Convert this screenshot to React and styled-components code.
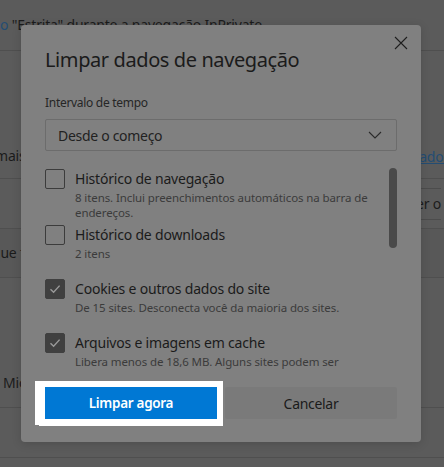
import React from "react";
import styled, { createGlobalStyle } from "styled-components";

const GlobalStyle = createGlobalStyle`
  html, body {
    margin: 0;
    padding: 0;
    background: #5b5b5b;
  }
  body {
    font-family: "Noto Sans", "Open Sans", sans-serif;
  }
`;

const Page = styled.div`
  position: relative;
  width: 444px;
  height: 467px;
  overflow: hidden;
  background: #5b5b5b;
  color: #1b1b1b;
  font-size: 14px;
  letter-spacing: -0.2px;
`;

const BgRow = styled.div`
  height: ${(p) => p.$h}px;
  display: flex;
  align-items: ${(p) => p.$align || "center"};
  justify-content: space-between;
  border-bottom: 1px solid #4f4f4f;
  background: ${(p) => p.$bg || "transparent"};
  box-sizing: border-box;
  padding-bottom: ${(p) => p.$pb || 0}px;
  white-space: nowrap;
`;

const BgText = styled.span`
  margin-left: ${(p) => p.$ml || 0}px;
  line-height: 20px;
`;

const BgLink = styled.span`
  color: #244d73;
  text-decoration: ${(p) => (p.$plain ? "none" : "underline")};
  margin-right: ${(p) => p.$mr || 0}px;
`;

const BgButton = styled.span`
  display: flex;
  align-items: center;
  height: 32px;
  margin-right: 3px;
  border-top: 1px solid #4c4c4c;
  border-bottom: 1px solid #4c4c4c;
  box-sizing: border-box;
`;

const Dialog = styled.div`
  position: absolute;
  left: 21px;
  top: 25px;
  width: 400px;
  height: 417px;
  box-sizing: border-box;
  padding: 21px 24px 23px;
  background: #808080;
  border-radius: 4px;
  box-shadow: 0 2px 10px rgba(0, 0, 0, 0.15);
  display: flex;
  flex-direction: column;
`;

const Header = styled.div`
  display: flex;
  justify-content: space-between;
  align-items: flex-start;
`;

const Title = styled.h1`
  margin: 0;
  font-size: 20px;
  line-height: 28px;
  font-weight: 400;
  letter-spacing: -0.4px;
  color: #1b1b1b;
`;

const Close = styled.button`
  width: 24px;
  height: 24px;
  margin: -15px -16px 0 0;
  padding: 0;
  border: none;
  background: none;
  display: flex;
  align-items: center;
  justify-content: center;
`;

const Label = styled.div`
  margin-top: 20px;
  font-size: 12px;
  line-height: 18px;
  letter-spacing: -0.3px;
  color: #262626;
`;

const Select = styled.div`
  margin-top: 7px;
  height: 32px;
  box-sizing: border-box;
  border: 1px solid #6c6c6c;
  border-radius: 2px;
  display: flex;
  align-items: center;
  justify-content: space-between;
  padding: 0 14px 0 12px;
  font-size: 14px;
  letter-spacing: -0.3px;
  color: #222;
`;

const ListWrap = styled.div`
  margin-top: 16px;
  height: 203px;
  display: flex;
  gap: 10px;
`;

const List = styled.div`
  flex: 1;
  overflow: hidden;
  padding-top: 2px;
`;

const Track = styled.div`
  width: 8px;
  padding-top: 1px;
`;

const Thumb = styled.div`
  height: 80px;
  border-radius: 4px;
  background: #4a4a4a;
`;

const Item = styled.div`
  height: ${(p) => p.$h}px;
  display: flex;
  align-items: flex-start;
  gap: 10px;
`;

const Box = styled.span`
  flex: none;
  width: 20px;
  height: 20px;
  box-sizing: border-box;
  border-radius: 2px;
  border: 1px solid ${(p) => (p.$checked ? "#404040" : "#3c3c3c")};
  background: ${(p) => (p.$checked ? "#404040" : "transparent")};
  display: flex;
  align-items: center;
  justify-content: center;
`;

const ItemText = styled.div`
  display: flex;
  flex-direction: column;
  gap: 1px;
`;

const ItemTitle = styled.div`
  font-size: 14px;
  line-height: 20px;
  letter-spacing: -0.2px;
  color: #1b1b1b;
`;

const ItemDesc = styled.div`
  font-size: 11.5px;
  line-height: 15px;
  letter-spacing: -0.1px;
  color: #3b3b3b;
`;

const Buttons = styled.div`
  margin-top: auto;
  display: flex;
  gap: 8px;
`;

const Button = styled.button`
  flex: 1;
  height: 32px;
  border: none;
  border-radius: ${(p) => (p.$primary ? 0 : 2)}px;
  font-family: inherit;
  font-size: ${(p) => (p.$primary ? 13.5 : 14)}px;
  letter-spacing: -0.3px;
  font-weight: ${(p) => (p.$primary ? 600 : 400)};
  color: ${(p) => (p.$primary ? "#ffffff" : "#1b1b1b")};
  background: ${(p) => (p.$primary ? "#0078d4" : "#7a7a7a")};
  box-shadow: ${(p) =>
    p.$primary
      ? "0 0 0 6px #fff, -4px 0 0 6px #fff, 0 1px 0 6px #fff"
      : "none"};
`;

const Check = () => (
  <svg width="14" height="14" viewBox="0 0 14 14">
    <path d="M2.5 7.3 L5.6 10.3 L11.6 3.6" fill="none" stroke="#9a9a9a" strokeWidth="1.4" />
  </svg>
);

const items = [
  {
    title: "Histórico de navegação",
    desc: ["8 itens. Inclui preenchimentos automáticos na barra de", "endereços."],
    checked: false,
    h: 56,
  },
  { title: "Histórico de downloads", desc: ["2 itens"], checked: false, h: 54 },
  {
    title: "Cookies e outros dados do site",
    desc: ["De 15 sites. Desconecta você da maioria dos sites."],
    checked: true,
    h: 54,
  },
  {
    title: "Arquivos e imagens em cache",
    desc: ["Libera menos de 18,6 MB. Alguns sites podem ser", "exibidos mais lentamente na próxima visita."],
    checked: true,
    h: 54,
  },
];

export default function App() {
  return (
    <>
      <GlobalStyle />
      <Page>
        <BgRow $h={51}>
          <BgText>
            <BgLink $plain>o</BgLink> "Estrita" durante a navegação InPrivate
          </BgText>
        </BgRow>
        <BgRow $h={128} $align="flex-end" $pb={12}>
          <BgText $ml={-5}>mais sobre este recurso</BgText>
          <BgLink $mr={-6}>Ver dados</BgLink>
        </BgRow>
        <BgRow $h={50}>
          <span />
          <BgButton>Ver o</BgButton>
        </BgRow>
        <BgRow $h={49} $bg="#585858">
          <BgText $ml={-8}>que fez login</BgText>
        </BgRow>
        <BgRow $h={130} $align="flex-end" $pb={14}>
          <BgText $ml={3}>Microsoft Edge</BgText>
        </BgRow>
        <BgRow $h={50} />

        <Dialog role="dialog">
          <Header>
            <Title>Limpar dados de navegação</Title>
            <Close aria-label="Fechar">
              <svg width="14" height="14" viewBox="0 0 14 14">
                <path d="M1 1 L13 13 M13 1 L1 13" stroke="#1e1e1e" strokeWidth="1.1" />
              </svg>
            </Close>
          </Header>
          <Label>Intervalo de tempo</Label>
          <Select>
            <span>Desde o começo</span>
            <svg width="14" height="8" viewBox="0 0 14 8">
              <path d="M1 1 L7 7 L13 1" fill="none" stroke="#2a2a2a" strokeWidth="1.1" />
            </svg>
          </Select>
          <ListWrap>
            <List>
              {items.map((it) => (
                <Item key={it.title} $h={it.h}>
                  <Box $checked={it.checked}>{it.checked && <Check />}</Box>
                  <ItemText>
                    <ItemTitle>{it.title}</ItemTitle>
                    <ItemDesc>
                      {it.desc.map((d, i) => (
                        <div key={i}>{d}</div>
                      ))}
                    </ItemDesc>
                  </ItemText>
                </Item>
              ))}
            </List>
            <Track>
              <Thumb />
            </Track>
          </ListWrap>
          <Buttons>
            <Button $primary>Limpar agora</Button>
            <Button>Cancelar</Button>
          </Buttons>
        </Dialog>
      </Page>
    </>
  );
}
